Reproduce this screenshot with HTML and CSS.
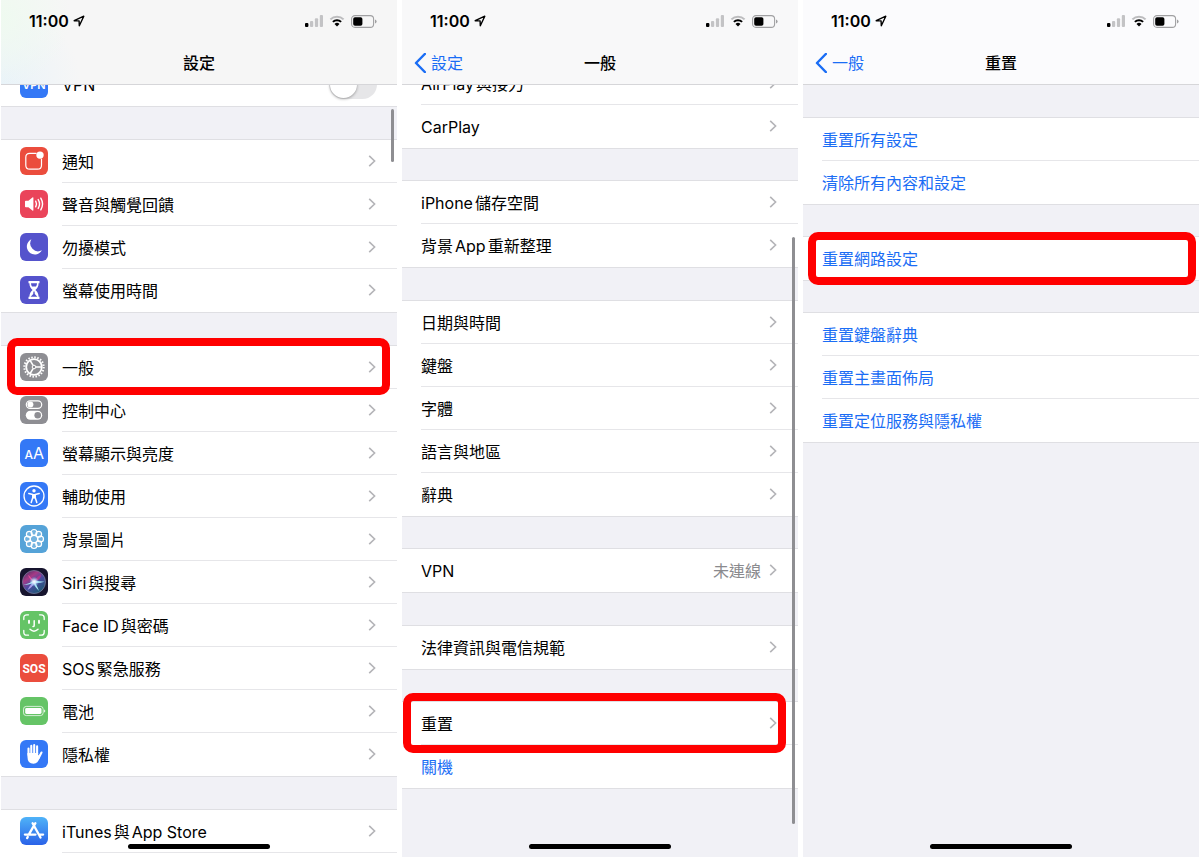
FILE: index.html
```html
<!DOCTYPE html>
<html lang="zh-Hant-TW">
<head>
<meta charset="utf-8">
<meta name="viewport" content="width=device-width, initial-scale=1">
<title>設定</title>
<link rel="stylesheet" href="styles.css">
</head>
<body>
<svg class="sprite" aria-hidden="true">
  <symbol id="location" viewBox="0 0 12 12"><path d="M1.2 5.7 10.8 1.2 6.3 10.8 6.1 5.9Z" fill="none" stroke="#000" stroke-width="1.4" stroke-linejoin="round"/></symbol>
  <symbol id="signal" viewBox="0 0 18 12"><rect x="0" y="8" width="3.4" height="4" rx="1" fill="#000"/><g fill="#c3c3c5"><rect x="5" y="6" width="3.2" height="6" rx="1"/><rect x="9.9" y="3.2" width="3.2" height="8.8" rx="1"/><rect x="14.8" y="0" width="3.2" height="12" rx="1"/></g></symbol>
  <symbol id="wifi" viewBox="0 0 16 12"><g fill="none" stroke-width="2"><path d="M1.4 4.4a9.3 9.3 0 0 1 13.2 0" stroke="#bdbdbf"/><path d="M3.9 6.9a5.8 5.8 0 0 1 8.2 0" stroke="#000"/></g><path d="M8 11.6 5.5 9.1a3.5 3.5 0 0 1 5 0Z" fill="#000"/></symbol>
  <symbol id="battery" viewBox="0 0 26 13"><rect x=".6" y=".6" width="22" height="11.8" rx="3.4" fill="none" stroke="#a0a0a2" stroke-width="1.1"/><rect x="2.2" y="2.3" width="9.2" height="8.4" rx="1.8"/><path d="M24 4.4q1.6.6 1.6 2.1T24 8.6Z" fill="#a0a0a2"/></symbol>
  <symbol id="chevron" viewBox="0 0 8 12"><path d="M1.2.8 6.6 6 1.2 11.2" fill="none" stroke="#b4b4b8" stroke-width="1.6"/></symbol>
  <symbol id="back" viewBox="0 0 12 20"><path d="M10.8 1 2 10l8.8 9" fill="none" stroke="currentColor" stroke-width="2.5" stroke-linecap="round" stroke-linejoin="round"/></symbol>
</svg>
<main class="phones">
  <section class="phone">
    <header class="bar bar-tinted">
      <div class="status"><span class="time">11:00</span><svg class="location"><use href="#location"/></svg><svg class="signal"><use href="#signal"/></svg><svg class="wifi"><use href="#wifi"/></svg><svg class="battery"><use href="#battery"/></svg></div>
      <div class="nav"><h1 class="title">設定</h1></div>
    </header>
    <div class="scroller">
      <ul class="group group-under">
        <li class="row"><svg class="icon" viewBox="0 0 28 28"><rect width="28" height="28" rx="6" fill="#3478f6"/><text class="icon-vpn" x="14" y="19" text-anchor="middle">VPN</text></svg><label class="body"><span class="label">VPN</span><input class="switch" type="checkbox"></label></li>
      </ul>
      <ul class="group">
        <li class="row"><svg class="icon" viewBox="0 0 28 28"><rect width="28" height="28" rx="6" fill="#eb4d3d"/><path d="M16.5 6.4H9.8q-4 0-4 4v7.8q0 4 4 4h7.7q4 0 4-4v-6.500" fill="none" stroke="#fff" stroke-width="1.2"/><circle cx="20" cy="8.1" r="3.7" fill="#fff"/></svg><a class="body" href="#notifications"><span class="label">通知</span><svg class="chevron"><use href="#chevron"/></svg></a></li>
        <li class="row"><svg class="icon" viewBox="0 0 28 28"><rect width="28" height="28" rx="6" fill="#ea445a"/><path d="M5 11.6q0-.8.8-.8h2.6l4-3.3q1-.7 1 .5v12q0 1.2-1 .5l-4-3.3H5.8q-.8 0-.8-.8Z" fill="#fff"/><path d="M15.7 11.2q1.6 2.8 0 5.6M18.2 9.6q2.7 4.4 0 8.8M20.8 8.2q3.5 5.800 0 11.6" fill="none" stroke="#fff" stroke-width="1.4" stroke-linecap="round"/></svg><a class="body" href="#sounds"><span class="label">聲音與觸覺回饋</span><svg class="chevron"><use href="#chevron"/></svg></a></li>
        <li class="row"><svg class="icon" viewBox="0 0 28 28"><rect width="28" height="28" rx="6" fill="#5553cc"/><path d="M11.4 6.300A8 8 0 1 0 21.9 17.3 7.9 7.9 0 0 1 11.4 6.300Z" fill="#fff"/></svg><a class="body" href="#dnd"><span class="label">勿擾模式</span><svg class="chevron"><use href="#chevron"/></svg></a></li>
        <li class="row"><svg class="icon" viewBox="0 0 28 28"><rect width="28" height="28" rx="6" fill="#5553cc"/><path d="M8.5 5h11v2.2h-.9c0 3.2-1.4 5-3.2 6.8 1.8 1.8 3.2 3.6 3.2 6.8h.9V23h-11v-2.2h.9c0-3.2 1.4-5 3.2-6.8-1.8-1.8-3.2-3.6-3.2-6.8h-.9Z" fill="#fff"/><path d="M11 7.2h6q0 1.7-1 3.2h-4q-1-1.5-1-3.2ZM13.4 15.5h1.2l.2 2.5 2.6 2.8h-6.8l2.6-2.8Z" fill="#5553cc"/></svg><a class="body" href="#screen-time"><span class="label">螢幕使用時間</span><svg class="chevron"><use href="#chevron"/></svg></a></li>
      </ul>
      <ul class="group">
        <li class="row marked mark-general"><svg class="icon" viewBox="0 0 28 28"><rect width="28" height="28" rx="6" fill="#8e8e93"/><circle cx="14" cy="14" r="9.7" fill="none" stroke="#fff" stroke-width="2" stroke-dasharray="1.5 1.547"/><circle cx="14" cy="14" r="7.8" fill="none" stroke="#fff" stroke-width="1.8"/><circle cx="14" cy="14" r="1.8" fill="none" stroke="#fff"/><path d="M15.8 14h5.7M13.1 12.4 10.2 7.5M13.1 15.6l-2.9 4.9" stroke="#fff" stroke-width="1.5"/></svg><a class="body" href="#general"><span class="label">一般</span><svg class="chevron"><use href="#chevron"/></svg></a></li>
        <li class="row"><svg class="icon" viewBox="0 0 28 28"><rect width="28" height="28" rx="6" fill="#8e8e93"/><rect x="6.3" y="4.8" width="15.4" height="7.6" rx="3.8" fill="none" stroke="#fff" stroke-width="1.2"/><circle cx="10.4" cy="8.6" r="3" fill="#fff"/><rect x="5.8" y="14.7" width="16.4" height="9" rx="4.5" fill="#fff"/><circle cx="17.7" cy="19.2" r="3.3" fill="#8e8e93"/></svg><a class="body" href="#control"><span class="label">控制中心</span><svg class="chevron"><use href="#chevron"/></svg></a></li>
        <li class="row"><svg class="icon" viewBox="0 0 28 28"><rect width="28" height="28" rx="6" fill="#3478f6"/><text class="icon-a-small" x="4.500" y="20">A</text><text class="icon-a-large" x="13" y="20">A</text></svg><a class="body" href="#display"><span class="label">螢幕顯示與亮度</span><svg class="chevron"><use href="#chevron"/></svg></a></li>
        <li class="row"><svg class="icon" viewBox="0 0 28 28"><rect width="28" height="28" rx="6" fill="#3478f6"/><circle cx="14" cy="14" r="10" fill="none" stroke="#fff" stroke-width="1.3"/><circle cx="14" cy="8.8" r="1.7" fill="#fff"/><path d="M8.8 11.6 12.8 12.4v3.2l-1.6 5M19.2 11.6l-4 .8v3.2l1.6 5" fill="none" stroke="#fff" stroke-width="1.5" stroke-linecap="round" stroke-linejoin="round"/><path d="M12.2 12h3.6v4.4h-3.600Z" fill="#fff"/></svg><a class="body" href="#accessibility"><span class="label">輔助使用</span><svg class="chevron"><use href="#chevron"/></svg></a></li>
        <li class="row"><svg class="icon" viewBox="0 0 28 28"><rect width="28" height="28" rx="6" fill="#55a3d8"/><g fill="#fff" fill-opacity=".18" stroke="#fff" stroke-width="1.2"><circle cx="14" cy="7.4" r="2.9"/><circle cx="18.7" cy="9.3" r="2.9"/><circle cx="20.6" cy="14" r="2.9"/><circle cx="18.7" cy="18.7" r="2.9"/><circle cx="14" cy="20.6" r="2.9"/><circle cx="9.3" cy="18.7" r="2.9"/><circle cx="7.4" cy="14" r="2.9"/><circle cx="9.3" cy="9.3" r="2.9"/><circle cx="14" cy="14" r="3.7"/></g></svg><a class="body" href="#wallpaper"><span class="label">背景圖片</span><svg class="chevron"><use href="#chevron"/></svg></a></li>
        <li class="row"><svg class="icon" viewBox="0 0 28 28"><defs><linearGradient id="siri-orb" x1="0" y1="0" x2=".7" y2="1"><stop offset="0" stop-color="#352d5c"/><stop offset=".35" stop-color="#a53a86"/><stop offset=".6" stop-color="#4c4aa0"/><stop offset="1" stop-color="#1d5a74"/></linearGradient><radialGradient id="siri-glow"><stop offset="0" stop-color="#fff"/><stop offset=".4" stop-color="#d9e9ff" stop-opacity=".8"/><stop offset="1" stop-color="#7fd4ff" stop-opacity="0"/></radialGradient></defs><rect width="28" height="28" rx="6" fill="#17142e"/><circle cx="14" cy="14" r="11.500" fill="url(#siri-orb)" stroke="#77779a" stroke-width=".8"/><path d="M14 13.500Q10 8 8 7q2 5 6 6.500" fill="#e9509c"/><path d="M14 13.500Q18 7 21 7q0 5-7 6.500" fill="#b0358b"/><path d="M3.500 17Q10 15.500 14 12.500q5 1 10.500 1.300-6 1.700-9 1.200 2.500 5 3.500 8-4-3.500-5.500-8Q8 17 3.500 17Z" fill="#a5e8f2"/><path d="M14 14q-4 2.500-6.500 8 5-2.500 7.300-8" fill="#a99bea"/><circle cx="14.200" cy="13.800" r="5" fill="url(#siri-glow)"/></svg><a class="body" href="#siri"><span class="label">Siri與搜尋</span><svg class="chevron"><use href="#chevron"/></svg></a></li>
        <li class="row"><svg class="icon" viewBox="0 0 28 28"><rect width="28" height="28" rx="6" fill="#65c466"/><g fill="none" stroke="#fff" stroke-width="1.3" stroke-linecap="round"><path d="M3.800 8.500V6.800q0-3 3-3h1.700M19.500 3.800h1.700q3 0 3 3v1.700M24.200 19.500v1.700q0 3-3 3h-1.700M8.500 24.200H6.800q-3 0-3-3v-1.700"/><path d="M9 9.800v2.100M19 9.800v2.100" stroke-width="1.900"/><path d="M14.200 9.800v4.600q0 1.200-1.200 1.200M10 18.300q4 3.800 8 0" stroke-width="1.500"/></g></svg><a class="body" href="#face-id"><span class="label">Face ID與密碼</span><svg class="chevron"><use href="#chevron"/></svg></a></li>
        <li class="row"><svg class="icon" viewBox="0 0 28 28"><rect width="28" height="28" rx="6" fill="#eb4d3d"/><text class="icon-sos" x="14" y="19" text-anchor="middle">SOS</text></svg><a class="body" href="#sos"><span class="label">SOS緊急服務</span><svg class="chevron"><use href="#chevron"/></svg></a></li>
        <li class="row"><svg class="icon" viewBox="0 0 28 28"><rect width="28" height="28" rx="6" fill="#65c466"/><rect x="3.500" y="9.400" width="19.700" height="9.200" rx="2.800" fill="none" stroke="#fff" stroke-width=".9" opacity=".8"/><rect x="5.200" y="11" width="16.300" height="6" rx="1.400" fill="#fff"/><path d="M24 12.500q1.300.4 1.300 1.500T24 15.500Z" fill="#fff" opacity=".8"/></svg><a class="body" href="#battery-settings"><span class="label">電池</span><svg class="chevron"><use href="#chevron"/></svg></a></li>
        <li class="row"><svg class="icon" viewBox="0 0 28 28"><rect width="28" height="28" rx="6" fill="#3478f6"/><g fill="none" stroke="#fff" stroke-width="2.100" stroke-linecap="round"><path d="M8.500 8.500V15M11.300 5.900V14M14.200 5.100V14M17.100 6.400V14M21.500 12.500 18.700 18"/></g><path d="M7.450 13h10.700v2.500l2.100-1.500-.5 3.500Q18 23.700 13.500 23.700q-6.050 0-6.050-7Z" fill="#fff"/></svg><a class="body" href="#privacy"><span class="label">隱私權</span><svg class="chevron"><use href="#chevron"/></svg></a></li>
      </ul>
      <ul class="group group-open">
        <li class="row"><svg class="icon" viewBox="0 0 28 28"><defs><linearGradient id="store" x2="0" y2="1"><stop offset="0" stop-color="#4fb3f8"/><stop offset="1" stop-color="#2a62e8"/></linearGradient></defs><rect width="28" height="28" rx="6" fill="url(#store)"/><path d="M15.400 6.200 8.900 17.400M12.600 6.200 20.500 20.500M4.900 17.600h10.600M18.800 17.600h4.300M7.800 19.900l-.7 1.200" fill="none" stroke="#fff" stroke-width="2.300" stroke-linecap="round"/></svg><a class="body" href="#store-settings"><span class="label">iTunes與App Store</span><svg class="chevron"><use href="#chevron"/></svg></a></li>
      </ul>
    </div>
    <span class="thumb thumb-top"></span>
    <span class="home"></span>
  </section>

  <section class="phone">
    <header class="bar bar-grey">
      <div class="status"><span class="time">11:00</span><svg class="location"><use href="#location"/></svg><svg class="signal"><use href="#signal"/></svg><svg class="wifi"><use href="#wifi"/></svg><svg class="battery"><use href="#battery"/></svg></div>
      <div class="nav"><a class="back" href="#settings"><svg class="back-icon"><use href="#back"/></svg>設定</a><h1 class="title">一般</h1></div>
    </header>
    <div class="scroller">
      <ul class="group group-under">
        <li class="row"><a class="body" href="#airplay"><span class="label">AirPlay與接力</span><svg class="chevron"><use href="#chevron"/></svg></a></li>
        <li class="row"><a class="body" href="#carplay"><span class="label">CarPlay</span><svg class="chevron"><use href="#chevron"/></svg></a></li>
      </ul>
      <ul class="group tight">
        <li class="row"><a class="body" href="#storage"><span class="label">iPhone儲存空間</span><svg class="chevron"><use href="#chevron"/></svg></a></li>
        <li class="row"><a class="body" href="#refresh"><span class="label">背景App重新整理</span><svg class="chevron"><use href="#chevron"/></svg></a></li>
      </ul>
      <ul class="group">
        <li class="row"><a class="body" href="#date"><span class="label">日期與時間</span><svg class="chevron"><use href="#chevron"/></svg></a></li>
        <li class="row"><a class="body" href="#keyboard"><span class="label">鍵盤</span><svg class="chevron"><use href="#chevron"/></svg></a></li>
        <li class="row"><a class="body" href="#fonts"><span class="label">字體</span><svg class="chevron"><use href="#chevron"/></svg></a></li>
        <li class="row"><a class="body" href="#language"><span class="label">語言與地區</span><svg class="chevron"><use href="#chevron"/></svg></a></li>
        <li class="row"><a class="body" href="#dictionary"><span class="label">辭典</span><svg class="chevron"><use href="#chevron"/></svg></a></li>
      </ul>
      <ul class="group tight">
        <li class="row"><a class="body" href="#vpn"><span class="label">VPN</span><span class="value">未連線</span><svg class="chevron"><use href="#chevron"/></svg></a></li>
      </ul>
      <ul class="group">
        <li class="row"><a class="body" href="#legal"><span class="label">法律資訊與電信規範</span><svg class="chevron"><use href="#chevron"/></svg></a></li>
      </ul>
      <ul class="group tight group-last">
        <li class="row marked mark-reset"><a class="body" href="#reset"><span class="label">重置</span><svg class="chevron"><use href="#chevron"/></svg></a></li>
        <li class="row"><button class="body action" type="button"><span class="label">關機</span></button></li>
      </ul>
    </div>
    <span class="thumb thumb-bottom"></span>
    <span class="home"></span>
  </section>

  <section class="phone">
    <header class="bar bar-light">
      <div class="status"><span class="time">11:00</span><svg class="location"><use href="#location"/></svg><svg class="signal"><use href="#signal"/></svg><svg class="wifi"><use href="#wifi"/></svg><svg class="battery"><use href="#battery"/></svg></div>
      <div class="nav"><a class="back" href="#general"><svg class="back-icon"><use href="#back"/></svg>一般</a><h1 class="title">重置</h1></div>
    </header>
    <div class="scroller">
      <ul class="group tight">
        <li class="row"><button class="body action" type="button"><span class="label">重置所有設定</span></button></li>
        <li class="row"><button class="body action" type="button"><span class="label">清除所有內容和設定</span></button></li>
      </ul>
      <ul class="group tight">
        <li class="row marked mark-network"><button class="body action" type="button"><span class="label">重置網路設定</span></button></li>
      </ul>
      <ul class="group tight group-last">
        <li class="row"><button class="body action" type="button"><span class="label">重置鍵盤辭典</span></button></li>
        <li class="row"><button class="body action" type="button"><span class="label">重置主畫面佈局</span></button></li>
        <li class="row"><button class="body action" type="button"><span class="label">重置定位服務與隱私權</span></button></li>
      </ul>
    </div>
    <span class="home"></span>
  </section>
</main>
</body>
</html>
```
FILE: styles.css
```css
*, *::before, *::after { box-sizing: border-box; }

body {
  margin: 0;
  background: #fff;
  color: #000;
  font: 16px/24px Inter, "Noto Sans CJK TC", sans-serif;
  text-autospace: normal;
}

.sprite { position: absolute; width: 0; height: 0; }

.phones {
  display: grid;
  grid-template-columns: repeat(3, 1fr);
  gap: 5px;
  height: 100vh;
  padding: 0 1px;
}

.phone {
  position: relative;
  display: flex;
  flex-direction: column;
  min-height: 0;
  overflow: hidden;
  background: #f1f1f6;
}

.bar {
  position: relative;
  z-index: 1;
  flex: none;
  border-bottom: 1px solid #d6d6d9;
}

.bar-tinted {
  background:
    radial-gradient(circle at 0 20%, #effaf0, transparent 70px),
    radial-gradient(circle at 0 100%, #e9f3f9, transparent 80px),
    #f6f6f6;
}
.bar-grey { background: #f8f8f9; }
.bar-light { background: #fbfbfd; }

.status {
  display: flex;
  align-items: center;
  height: 42px;
  padding: 0 20px 0 28px;
}
.time { font-weight: 600; }
.location { width: 12px; height: 12px; margin: 0 auto 0 4px; }
.signal { width: 18px; height: 12px; }
.wifi { width: 16px; height: 12px; margin: 0 6px; }
.battery { width: 26px; height: 13px; }

.nav {
  display: grid;
  grid-template-columns: 1fr auto 1fr;
  align-items: center;
  height: 42px;
  padding: 0 12px;
}
.title {
  grid-column: 2;
  margin: 0;
  font-size: 16px;
  line-height: 24px;
  font-weight: 500;
}
.back {
  display: flex;
  align-items: center;
  gap: 5px;
  color: #1a6df5;
  text-decoration: none;
}
.back-icon { width: 12px; height: 20px; }

.scroller {
  display: flex;
  flex: 1;
  flex-direction: column;
  min-height: 0;
}

.group {
  flex: none;
  margin: 0;
  padding: 0;
  list-style: none;
}
.group::before {
  content: "";
  display: block;
  height: 34px;
  border: solid #dfdfe3;
  border-width: 1px 0;
  background: #f1f1f6;
}
.tight::before { height: 33px; }
.group-under { margin-top: -22px; }
.group-under::before { display: none; }
.bar-grey + .scroller .group-under { margin-top: -23px; }
.bar-light + .scroller .group:first-child::before { border-top: 0; }
.group-last { border-bottom: 1px solid #dfdfe3; }
.group-open { flex: 1; background: #fff; }

.row {
  position: relative;
  display: flex;
  height: 43px;
  padding-left: 19px;
  background: #fff;
}
.icon {
  flex: none;
  width: 28px;
  height: 28px;
  margin: 7px 14px 0 0;
}
.body {
  display: flex;
  flex: 1;
  align-items: center;
  gap: 8px;
  padding: 0 21px 0 0;
  border: 0;
  border-bottom: 1px solid #e6e6e9;
  background: none;
  color: #000;
  font: inherit;
  text-align: left;
  text-decoration: none;
}
.row:last-child .body { border-bottom-color: transparent; }
.group-open .row:last-child .body { border-bottom-color: #e6e6e9; }
.label, .value { padding-top: 2px; }
.label { flex: 1; }
.value { color: #8a8a8e; }
.action { color: #1a6df5; }
.chevron { width: 8px; height: 12px; }

label.body { padding-right: 20px; }
.switch {
  appearance: none;
  width: 48px;
  height: 29px;
  margin: 0;
  border-radius: 15px;
  background: #e6e6e8;
}
.switch::before {
  content: "";
  display: block;
  width: 27px;
  height: 27px;
  margin: 1px;
  border-radius: 50%;
  background: #fff;
  box-shadow: 0 1px 3px #0005;
}

/* Red frames around the rows to tap */
.marked::after {
  content: "";
  position: absolute;
  z-index: 2;
  border: 8px solid #f00;
  border-radius: 10px;
  pointer-events: none;
}
.mark-general::after { inset: -8px 7px -6px 6px; }
.mark-reset::after { inset: -9px 12px -8px 1px; }
.mark-network::after { inset: -5px 3px -5px 5px; }

.thumb {
  position: absolute;
  right: 3px;
  width: 3px;
  border-radius: 2px;
  background: #8e8e92;
}
.thumb-top { top: 109px; height: 53px; }
.thumb-bottom { top: 237px; bottom: 33px; }

.home {
  position: absolute;
  bottom: 8px;
  left: 50%;
  width: 142px;
  height: 5px;
  margin-left: -71px;
  border-radius: 3px;
  background: #000;
}

.icon text { fill: #fff; font-family: Inter, sans-serif; }
.icon .icon-vpn { font-size: 11px; font-weight: 600; }
.icon .icon-a-small { font-size: 12px; font-weight: 500; }
.icon .icon-a-large { font-size: 16px; font-weight: 400; }
.icon .icon-sos { font-family: Roboto, sans-serif; font-size: 12px; font-weight: 700; }
```
